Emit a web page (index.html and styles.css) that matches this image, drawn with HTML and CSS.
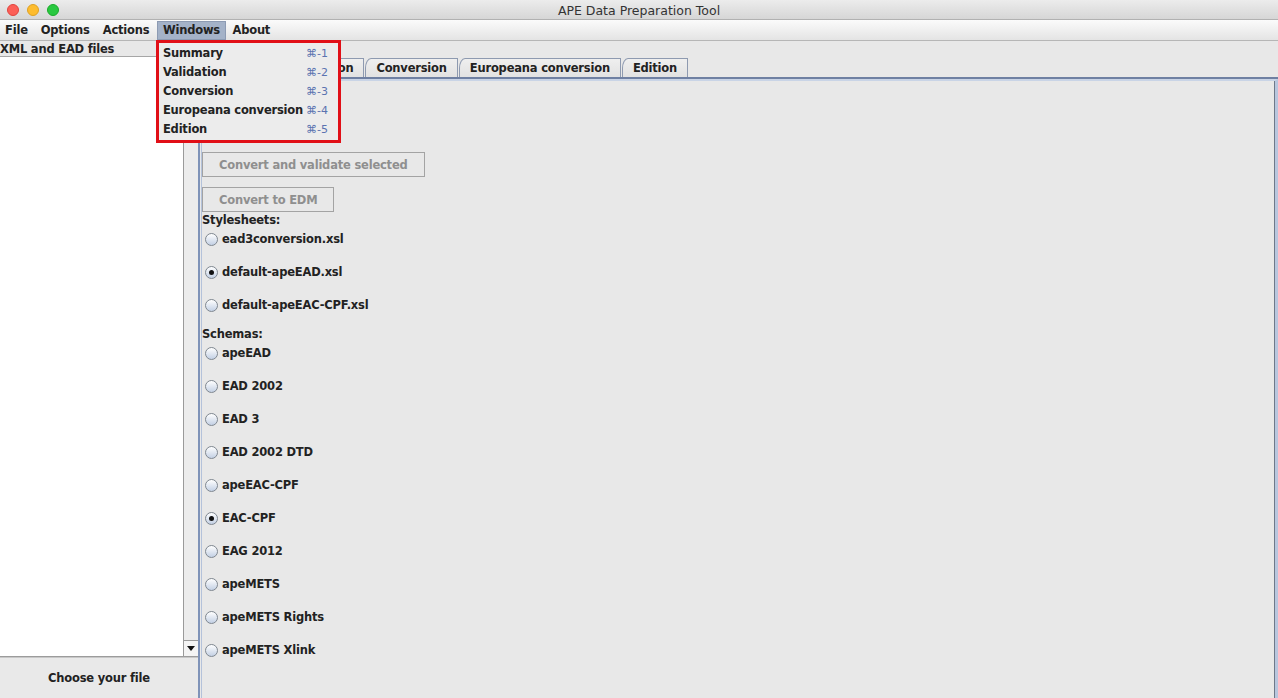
FILE: index.html
```html
<!DOCTYPE html>
<html lang="en">
<head>
    <meta charset="UTF-8">
    <title>APE Data Preparation Tool</title>
    <link rel="stylesheet" href="styles.css">
</head>
<body>
    <div class="window">
        <div class="titlebar">
            <div class="lights">
                <span class="light red"></span>
                <span class="light yellow"></span>
                <span class="light green"></span>
            </div>
            <div class="title">APE Data Preparation Tool</div>
        </div>

        <div class="menubar">
            <div class="menu">File</div>
            <div class="menu">Options</div>
            <div class="menu">Actions</div>
            <div class="menu open">Windows
                <div class="dropdown">
                    <div class="item"><span>Summary</span><span class="key">⌘-1</span></div>
                    <div class="item"><span>Validation</span><span class="key">⌘-2</span></div>
                    <div class="item"><span>Conversion</span><span class="key">⌘-3</span></div>
                    <div class="item"><span>Europeana conversion</span><span class="key">⌘-4</span></div>
                    <div class="item"><span>Edition</span><span class="key">⌘-5</span></div>
                </div>
            </div>
            <div class="menu">About</div>
        </div>

        <div class="main">
            <!-- left file list -->
            <div class="sidebar">
                <div class="side-header">XML and EAD files</div>
                <div class="list-wrap">
                    <div class="list"></div>
                    <div class="scrollbar">
                        <div class="arrow-down"></div>
                    </div>
                </div>
                <div class="choose">Choose your file</div>
            </div>

            <div class="divider"></div>

            <!-- right tabbed area -->
            <div class="content">
                <div class="tabs">
                    <div class="tab lead">Summary</div>
                    <div class="tab">Validation</div>
                    <div class="tab">Conversion</div>
                    <div class="tab">Europeana conversion</div>
                    <div class="tab">Edition</div>
                </div>
                <div class="panel">
                    <div class="panel-inner">
                        <button class="btn" disabled>Convert and validate selected</button>
                        <button class="btn" disabled>Convert to EDM</button>

                        <div class="group-label">Stylesheets:</div>
                        <div class="radio"><span class="dot"></span>ead3conversion.xsl</div>
                        <div class="radio"><span class="dot checked"></span>default-apeEAD.xsl</div>
                        <div class="radio"><span class="dot"></span>default-apeEAC-CPF.xsl</div>

                        <div class="group-label">Schemas:</div>
                        <div class="radio"><span class="dot"></span>apeEAD</div>
                        <div class="radio"><span class="dot"></span>EAD 2002</div>
                        <div class="radio"><span class="dot"></span>EAD 3</div>
                        <div class="radio"><span class="dot"></span>EAD 2002 DTD</div>
                        <div class="radio"><span class="dot"></span>apeEAC-CPF</div>
                        <div class="radio"><span class="dot checked"></span>EAC-CPF</div>
                        <div class="radio"><span class="dot"></span>EAG 2012</div>
                        <div class="radio"><span class="dot"></span>apeMETS</div>
                        <div class="radio"><span class="dot"></span>apeMETS Rights</div>
                        <div class="radio"><span class="dot"></span>apeMETS Xlink</div>
                    </div>
                </div>
            </div>
        </div>
    </div>
</body>
</html>
```

FILE: styles.css
```css
* {
    margin: 0;
    padding: 0;
    box-sizing: border-box;
}

body {
    font-family: 'DejaVu Sans', 'Liberation Sans', sans-serif;
    font-size: 11.5px;
    font-weight: bold;
    letter-spacing: -0.2px;
    color: #222;
    background: #e8e8e8;
    width: 1278px;
    height: 698px;
    overflow: hidden;
}

.window {
    display: flex;
    flex-direction: column;
    height: 698px;
}

/* Title bar */
.titlebar {
    position: relative;
    height: 20px;
    flex-shrink: 0;
    background: linear-gradient(#ececec, #d6d6d6);
    border-bottom: 1px solid #b1b1b1;
    display: flex;
    align-items: center;
    justify-content: center;
    padding-top: 1px;
}

.lights {
    position: absolute;
    left: 7px;
    top: 4px;
    display: flex;
    gap: 8px;
}

.light {
    width: 12px;
    height: 12px;
    border-radius: 50%;
}

.light.red { background: #fc5f57; border: 1px solid #e0443e; }
.light.yellow { background: #fdbc2e; border: 1px solid #dea123; }
.light.green { background: #29c840; border: 1px solid #1aab29; }

.title {
    font-weight: normal;
    font-size: 12.5px;
    letter-spacing: 0;
    color: #333;
}

/* Menu bar */
.menubar {
    height: 21px;
    flex-shrink: 0;
    display: flex;
    padding-top: 1px;
    background: linear-gradient(#fbfbfb, #e4e4e4);
    border-bottom: 1px solid #b6b6b6;
}

.menu {
    position: relative;
    padding: 0 6.5px;
    line-height: 19px;
}

.menu:first-child {
    padding-left: 5px;
}

.menu.open {
    background: #a4b2c8;
    border: 1px solid #8d9bb3;
    padding: 0 5px;
    line-height: 17px;
    margin-left: 1px;
}

.dropdown {
    position: absolute;
    top: 18px;
    left: -2px;
    width: 185px;
    height: 103px;
    background: #ececec;
    border: 3px solid #e10f17;
    padding: 1px 0 0 4px;
    z-index: 10;
}

.item {
    display: flex;
    justify-content: space-between;
    white-space: nowrap;
    height: 19px;
    line-height: 19px;
    padding-right: 10px;
}

.key {
    font-weight: normal;
    font-size: 11px;
    letter-spacing: 0;
    color: #5b73b0;
}

/* Main split */
.main {
    flex: 1;
    display: flex;
    min-height: 0;
}

.sidebar {
    width: 198px;
    display: flex;
    flex-direction: column;
}

.side-header {
    height: 16px;
    line-height: 16px;
    border-bottom: 1px solid #a6a6a6;
    background: #e8e8e8;
}

.list-wrap {
    flex: 1;
    display: flex;
    border-bottom: 1px solid #9c9c9c;
}

.list {
    flex: 1;
    background: #ffffff;
}

.scrollbar {
    width: 15px;
    border-left: 1px solid #9a9a9a;
    background: #ececec;
    display: flex;
    flex-direction: column;
    justify-content: flex-end;
}

.arrow-down {
    height: 16px;
    border-top: 1px solid #9a9a9a;
    background: #f4f4f4;
    position: relative;
}

.arrow-down::after {
    content: "";
    position: absolute;
    left: 3px;
    top: 5px;
    border-left: 4px solid transparent;
    border-right: 4px solid transparent;
    border-top: 5px solid #111;
}

.choose {
    height: 41px;
    line-height: 40px;
    text-align: center;
    background: #e9e9e9;
    border-top: 1px solid #c8c8c8;
}

.divider {
    width: 4px;
    border-left: 2px solid #7f93b8;
    border-right: 1px solid #b4c2da;
    background: #e8e8e8;
}

/* Tabs */
.content {
    flex: 1;
    display: flex;
    flex-direction: column;
    padding-top: 17px;
}

.tabs {
    display: flex;
    height: 21px;
    padding-left: 0;
    border-bottom: 2px solid #6f80a2;
}

.tab {
    padding: 0 10px;
    line-height: 19px;
    border: 1px solid #8e9ab0;
    border-bottom: none;
    border-top-left-radius: 6px 10px;
    background: linear-gradient(#efefef, #e2e2e2);
    margin-right: 1px;
}

.tab.lead {
    padding-left: 4px;
}

.panel {
    flex: 1;
    border-top: 2px solid #c9d4e6;
    border-right: 3px solid #b8c6de;
}

.panel-inner {
    height: 100%;
    border-right: 1px solid #6e7889;
    display: flex;
    flex-direction: column;
    align-items: flex-start;
    padding-top: 71px;
}

.btn {
    font-family: inherit;
    font-size: 11.5px;
    font-weight: bold;
    letter-spacing: -0.2px;
    color: #8f8f8f;
    background: #e8e8e8;
    border: 1px solid #a3a3a3;
    height: 25px;
    padding: 0 16px;
    margin-bottom: 10px;
}

.btn + .btn {
    margin-bottom: 0;
}

.group-label {
    height: 15px;
    line-height: 15px;
    margin-top: 1px;
}

.radio + .group-label {
    margin-top: 0;
}

.radio {
    display: flex;
    align-items: center;
    height: 22px;
    margin-bottom: 11px;
    padding-left: 3px;
    gap: 4px;
}

.dot {
    width: 13px;
    height: 13px;
    border-radius: 50%;
    border: 1px solid #7f8790;
    background: linear-gradient(#ffffff, #c3d0e4);
    position: relative;
}

.dot.checked::after {
    content: "";
    position: absolute;
    left: 3px;
    top: 3px;
    width: 5px;
    height: 5px;
    border-radius: 50%;
    background: #111;
}
```
